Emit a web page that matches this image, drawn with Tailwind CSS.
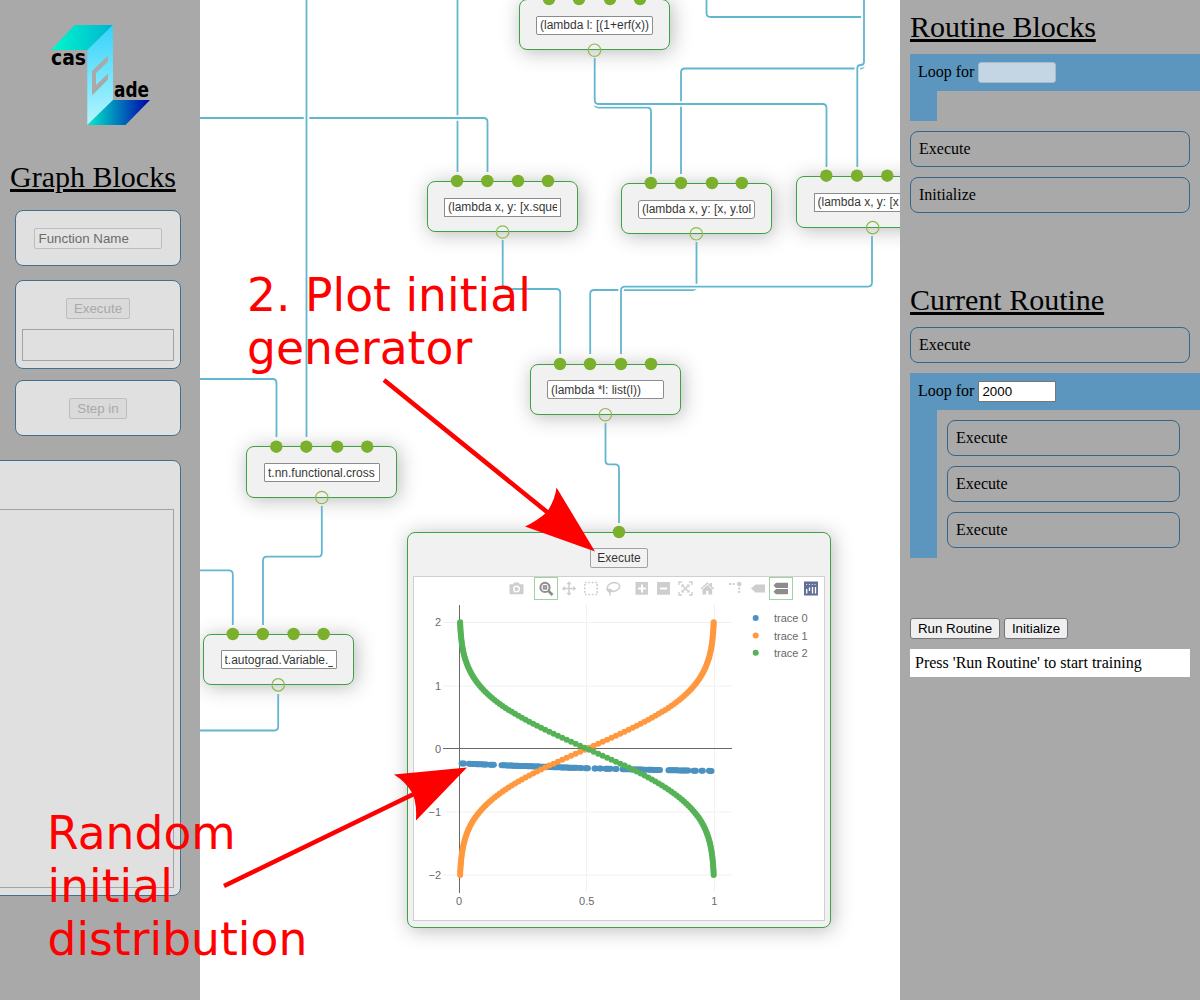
<!DOCTYPE html>
<html lang="en">
<head>
<meta charset="utf-8">
<title>Cascade</title>
<script src="https://cdn.jsdelivr.net/npm/@tailwindcss/browser@4"></script>
</head>
<body class="relative flex h-[1000px] w-[1200px] overflow-hidden bg-white font-['Liberation_Serif',serif] text-black">

<!-- Graph block palette -->
<aside class="h-full w-[200px] shrink-0 overflow-hidden bg-[#a9a9a9] pt-[25px]">
  <svg class="ml-[50px] block" width="102" height="102" viewBox="50 25 102 102">
    <defs>
      <linearGradient id="lt"><stop offset="0" stop-color="#00f8cc"/><stop offset="1" stop-color="#00b4d0"/></linearGradient>
      <linearGradient id="lm" x1="0" y1="0" x2="0" y2="1"><stop offset="0" stop-color="#35d2fb"/><stop offset="1" stop-color="#b4f6ff"/></linearGradient>
      <linearGradient id="lb"><stop offset="0" stop-color="#00efcc"/><stop offset="0.5" stop-color="#0078bc"/><stop offset="1" stop-color="#0000a8"/></linearGradient>
    </defs>
    <polygon points="74.5,25 113,25 88,50 51,50" fill="url(#lt)"/>
    <polygon points="113,25 113,100 87.3,125 87.3,50" fill="url(#lm)"/>
    <polygon points="113,100 150,100 125.5,125 87.3,125" fill="url(#lb)"/>
    <polygon points="108,55.500 92,71 92,95.500 108,79.500 108,73.500 96,85 96,73 108,61.500" fill="#a9a9a9"/>
    <text x="51" y="64.5" font-family="DejaVu Sans" font-weight="bold" font-size="21" textLength="35" lengthAdjust="spacingAndGlyphs">cas</text>
    <text x="114" y="97" font-family="DejaVu Sans" font-weight="bold" font-size="21" textLength="35" lengthAdjust="spacingAndGlyphs">ade</text>
  </svg>
  <h1 class="mt-[33px] ml-[10px] text-[30px] leading-[34px] underline">Graph Blocks</h1>
  <div class="mt-4 ml-[15px] flex h-14 w-[166px] items-center justify-center rounded-lg border border-[#44708f] bg-[#e0e0e0] font-['Liberation_Sans',sans-serif] text-[13.33px]">
    <div class="flex h-[21px] w-32 items-center rounded-[2px] border border-[#bdbdbd] bg-[#e3e3e3] pt-px pl-[3.5px] text-[#6c6c6c]">Function Name</div>
  </div>
  <div class="mt-[14px] ml-[15px] flex h-[89px] w-[166px] flex-col items-center rounded-lg border border-[#44708f] bg-[#e0e0e0] pt-[17px] font-['Liberation_Sans',sans-serif] text-[13.33px]">
    <div class="flex h-[21px] w-16 items-center justify-center rounded-[2px] border border-[#bdbdbd] bg-[#dadada] pt-px text-[#a9a9a9]">Execute</div>
    <div class="mt-[10px] h-8 w-[152px] border border-[#a3a3a3]"></div>
  </div>
  <div class="mt-[11px] ml-[15px] flex h-14 w-[166px] items-center justify-center rounded-lg border border-[#44708f] bg-[#e0e0e0] font-['Liberation_Sans',sans-serif] text-[13.33px]">
    <div class="flex h-[21px] w-[58px] items-center justify-center rounded-[2px] border border-[#bdbdbd] bg-[#dadada] pt-px text-[#a9a9a9]">Step in</div>
  </div>
  <div class="mt-6 -ml-[20px] h-[436px] w-[201px] rounded-lg border border-[#44708f] bg-[#e0e0e0] pt-12 pr-1.5">
    <div class="h-[379px] border border-[#a3a3a3]"></div>
  </div>
</aside>

<!-- Graph canvas -->
<main class="relative h-full w-[700px] shrink-0 overflow-hidden bg-white font-['Liberation_Sans',sans-serif] text-xs">
  <svg id="wires" class="absolute inset-0" width="700" height="1000" viewBox="200 0 700 1000" fill="none"></svg>

  <div class="absolute top-[-1px] left-[319px] flex h-[51px] w-[151px] justify-center rounded-lg border border-[#108a18] bg-[#eeeeef] pt-4 opacity-80 shadow-[2px_2px_19px_#aaa]">
    <div class="h-[19px] w-[117px] rounded-[2px] border border-[#707070] bg-white px-[3px]"><div class="overflow-hidden leading-[17px] whitespace-nowrap">(lambda l: [(1+erf(x))</div></div>
  </div>
  <div class="absolute top-[181px] left-[227px] flex h-[51px] w-[151px] justify-center rounded-lg border border-[#108a18] bg-[#eeeeef] pt-4 opacity-80 shadow-[2px_2px_19px_#aaa]">
    <div class="h-[19px] w-[117px] border border-[#707070] bg-white px-[3px]"><div class="overflow-hidden leading-[17px] whitespace-nowrap">(lambda x, y: [x.sque</div></div>
  </div>
  <div class="absolute top-[183px] left-[421px] flex h-[51px] w-[151px] justify-center rounded-lg border border-[#108a18] bg-[#eeeeef] pt-4 opacity-80 shadow-[2px_2px_19px_#aaa]">
    <div class="h-[19px] w-[117px] rounded-[3px] border border-[#707070] bg-white px-[3px]"><div class="overflow-hidden leading-[17px] whitespace-nowrap">(lambda x, y: [x, y.tol</div></div>
  </div>
  <div class="absolute top-[176px] left-[596px] flex h-[52px] w-[151px] justify-center rounded-lg border border-[#108a18] bg-[#eeeeef] pt-4 opacity-80 shadow-[2px_2px_19px_#aaa]">
    <div class="ml-0.5 h-[19px] w-[117px] border border-[#707070] bg-white px-[2.5px]"><div class="overflow-hidden leading-[17px] whitespace-nowrap">(lambda x, y: [x</div></div>
  </div>
  <div class="absolute top-[364px] left-[330px] flex h-[51px] w-[151px] justify-center rounded-lg border border-[#108a18] bg-[#eeeeef] pt-[15px] opacity-80 shadow-[2px_2px_19px_#aaa]">
    <div class="h-[19px] w-[117px] rounded-[2px] border border-[#707070] bg-white px-[3px]"><div class="overflow-hidden leading-[18px] whitespace-nowrap">(lambda *l: list(l))</div></div>
  </div>
  <div class="absolute top-[446px] left-[46px] flex h-[52px] w-[151px] justify-center rounded-lg border border-[#108a18] bg-[#eeeeef] pt-4 opacity-80 shadow-[2px_2px_19px_#aaa]">
    <div class="ml-px h-[19px] w-[116px] rounded-[1px] border border-[#707070] bg-white px-[3px]"><div class="overflow-hidden leading-[18px] whitespace-nowrap">t.nn.functional.cross</div></div>
  </div>
  <div class="absolute top-[634px] left-[3px] flex h-[51px] w-[151px] justify-center rounded-lg border border-[#108a18] bg-[#eeeeef] pt-[15px] opacity-80 shadow-[2px_2px_19px_#aaa]">
    <div class="h-[19px] w-[116px] rounded-[1px] border border-[#707070] bg-white px-[3px]"><div class="overflow-hidden leading-[18px] whitespace-nowrap">t.autograd.Variable._</div></div>
  </div>

  <!-- Plot node -->
  <div class="absolute top-[532px] left-[207px] flex h-[396px] w-[424px] flex-col items-center rounded-lg border border-[#108a18] bg-[#eeeeef] pt-[15px] opacity-80 shadow-[2px_2px_19px_#aaa]">
    <div class="flex h-5 w-[58px] items-center justify-center rounded-[2px] border border-[#8c8c8c] bg-[#efefef]">Execute</div>
    <div class="mt-2 h-[345px] w-[412px] border border-[#c4c4c4] bg-white">
      <svg id="plot" class="block" width="410" height="343" viewBox="414 577 410 343" font-size="11" fill="#444">
        <g stroke="#eee" fill="none">
          <path d="M586.5 604V892M714.5 604V892M443 622.5H732M443 686H732M443 812H732M443 875H732"/>
          <path stroke="#444" d="M459.5 605V893M443 748.5H732"/>
        </g>
        <g text-anchor="end"><text x="441" y="626">2</text><text x="441" y="690">1</text><text x="441" y="753">0</text><text x="441" y="816">−1</text><text x="441" y="879">−2</text></g>
        <g text-anchor="middle"><text x="459" y="905">0</text><text x="586.7" y="905">0.5</text><text x="714.3" y="905">1</text></g>
        <g id="points"></g>
        <circle cx="755.7" cy="618" r="3" fill="#1f77b4"/><circle cx="755.7" cy="635.5" r="3" fill="#ff7f0e"/><circle cx="755.7" cy="652.7" r="3" fill="#2ca02c"/>
        <text x="774" y="622">trace 0</text><text x="774" y="640">trace 1</text><text x="774" y="657">trace 2</text>

        <!-- Mode bar -->
        <g fill="#c3c3c3" stroke="none">
          <path fill-rule="evenodd" d="M509.5 585.2q0-1 1-1h2.7l1-1.7h4.6l1 1.7h2.7q1 0 1 1v8q0 1-1 1h-12q-1 0-1-1zM520 589a3.5 3.5 0 1 0-7 0a3.5 3.5 0 1 0 7 0z"/><circle cx="516.5" cy="589" r="2.1"/>
          <g fill="none" stroke="#707070">
            <circle cx="545" cy="587.4" r="4.6" stroke-width="2"/><path stroke-width="2.6" d="M548.5 591l4 4"/><rect x="543.3" y="585.7" width="3.4" height="3.4" fill="#909090" stroke-width="1"/>
          </g>
          <g fill="none" stroke="#c3c3c3" stroke-width="1.5"><path d="M563 588.5h12M569 582.5v12"/></g>
          <path d="M561.8 588.5l3-2.6v5.2zM576.2 588.5l-3-2.6v5.2zM569 581.3l-2.6 3h5.2zM569 595.7l-2.6-3h5.2z"/>
          <rect x="584.8" y="582.5" width="12.4" height="12" fill="none" stroke="#c3c3c3" stroke-width="1.6" stroke-dasharray="1.8 1.7"/>
          <g fill="none" stroke="#c3c3c3" stroke-width="1.6"><ellipse cx="613.5" cy="587" rx="6.2" ry="4.3" transform="rotate(-12 613.5 587)"/><path d="M607 588.5c-.5 3 4.5 4.2 4.3 1.8c-.3-1.7-3.4-.6-2.5 1.2c.6 1.4 2 1.7 1.4 4"/></g>
          <path fill-rule="evenodd" d="M635.500 582h12.500v12.800h-12.500zM641 584.500v3h-3v2h3v3h2v-3h3v-2h-3v-3z"/>
          <path fill-rule="evenodd" d="M657 582h13v12.800h-13zM660 587.500v2h7v-2z"/>
          <g fill="none" stroke="#c3c3c3" stroke-width="1.300"><path d="M679 585v-3h3M689 582h3v3M692 592v3h-3M682 595h-3v-3"/><path stroke-width="1.500" d="M682 585l7 7M689 585l-7 7"/></g>
          <path d="M681.500 587.500v-3h3zM686.500 584.500h3v3zM689.500 589.500v3h-3zM684.500 592.500h-3v-3z"/>
          <path d="M700.500 588.500l6.800-6.300l2.700 2.500v-1.700h2v3.500l2.200 2l-.9 1l-6-5.500l-6 5.500zM702.500 589.500l4.800-4.400l4.900 4.400v5h-3.700v-3.700h-2.500v3.700h-3.500z"/>
          <path d="M729 583h2v2h-2zM732.500 583h2v2h-2zM738.200 587.500h2v2h-2zM738.200 591h2v2h-2z"/><circle cx="739.200" cy="584" r="2.300"/>
          <path d="M751 588.500l4.500-4h9.500v8h-9.500z"/>
          <path fill="#707070" d="M773.500 585.500l2.500-2.700h12v5.200h-12zM773.500 591.700l2.500-2.700h12v5.200h-12z"/>
          <rect x="804" y="581.500" width="14" height="14" fill="#3b4d7d"/>
          <path stroke="#fff" stroke-width="1.300" d="M806.700 589v4.500M809.500 587.500v3.500M812.500 587v6.500M815.500 587v6.500" fill="none"/><path stroke="#c5cde4" stroke-width="1.200" stroke-dasharray="1.200 1.600" d="M806 584.500h10" fill="none"/>
          <g fill="none" stroke="#159015" stroke-dasharray="1 1"><rect x="534.500" y="577.500" width="23" height="22"/><rect x="769.500" y="577.500" width="23" height="22"/></g>
        </g>
      </svg>
    </div>
  </div>

  <svg id="ports" class="absolute inset-0" width="700" height="1000" viewBox="200 0 700 1000"></svg>
</main>

<!-- Routine panel -->
<aside class="h-full w-[300px] shrink-0 overflow-hidden bg-[#a9a9a9] pt-[10px] pl-[10px]">
  <h1 class="text-[30px] leading-[34px] underline">Routine Blocks</h1>
  <div class="mt-[10px] flex h-[37px] items-center gap-1 bg-[#5c95bd] pl-2"><span class="pb-0.5">Loop for</span><div class="h-[21px] w-[78px] rounded-[3px] border border-[#a4bccd] bg-[#c4d5e3]"></div></div>
  <div class="h-[30px] w-[27px] bg-[#5c95bd]"></div>
  <div class="mt-[10px] flex h-9 w-[280px] items-center rounded-lg border border-[#346789] pl-2">Execute</div>
  <div class="mt-[10px] flex h-9 w-[280px] items-center rounded-lg border border-[#346789] pl-2">Initialize</div>
  <h1 class="mt-[70px] text-[30px] leading-[34px] underline">Current Routine</h1>
  <div class="mt-[10px] flex h-9 w-[280px] items-center rounded-lg border border-[#346789] pl-2">Execute</div>
  <div class="mt-[10px] flex h-[37px] items-center gap-1 bg-[#5c95bd] pl-2"><span class="pb-0.5">Loop for</span><div class="flex h-[21px] w-[78px] items-center border border-[#767676] bg-white pl-[3px] font-['Liberation_Sans',sans-serif] text-[13.33px]">2000</div></div>
  <div class="flex">
    <div class="h-[148px] w-[27px] bg-[#5c95bd]"></div>
    <div class="ml-[10px] flex flex-col gap-[10px] pt-[10px]">
      <div class="flex h-9 w-[233px] items-center rounded-lg border border-[#346789] pl-2">Execute</div>
      <div class="flex h-9 w-[233px] items-center rounded-lg border border-[#346789] pl-2">Execute</div>
      <div class="flex h-9 w-[233px] items-center rounded-lg border border-[#346789] pl-2">Execute</div>
    </div>
  </div>
  <div class="mt-[60px] flex gap-1 font-['Liberation_Sans',sans-serif] text-[13.33px]">
    <button class="h-[21px] w-[90px] rounded-[3px] border border-[#767676] bg-[#efefef] leading-[19px]">Run Routine</button>
    <button class="h-[21px] w-16 rounded-[3px] border border-[#767676] bg-[#efefef] leading-[19px]">Initialize</button>
  </div>
  <div class="mt-[10px] flex h-7 w-[280px] items-center bg-white pl-[5px]">Press 'Run Routine' to start training</div>
</aside>

<!-- Tutorial annotations -->
<svg class="pointer-events-none absolute inset-0" width="1200" height="1000" viewBox="0 0 1200 1000" fill="#f00" font-family="DejaVu Sans" font-size="45.6">
  <text x="247" y="311">2. Plot initial</text>
  <text x="247" y="364">generator</text>
  <text x="47" y="849">Random</text>
  <text x="47.500" y="902">initial</text>
  <text x="47.500" y="955">distribution</text>
  <path d="M384 380L552 516M224 886L418 792" stroke="#f00" stroke-width="4.500" fill="none"/>
  <path d="M595 551.500L556.500 487.500Q555 500 547 512Q537 521 525 526.500Z"/>
  <path d="M467 767.500L394 774.500Q406 782 413 794Q417 806 416 820.500Z"/>
</svg>

<script>
const svg = (parent, tag, attrs) => {
  const el = document.createElementNS('http://www.w3.org/2000/svg', tag);
  for (const k in attrs) el.setAttribute(k, attrs[k]);
  parent.appendChild(el);
};
const wires = document.getElementById('wires');
const ports = document.getElementById('ports');
const points = document.getElementById('points');

// Orthogonal connectors, each with rounded elbows and a white outline.
const routes = [
  [[457.5,-5],[457.5,172]],
  [[190,118],[487.5,118],[487.5,172]],
  [[306.5,-5],[306.5,437]],
  [[706.5,-5],[706.5,17],[864,17]],
  [[864,-5],[864,68.5],[681,68.5],[681,174]],
  [[864,-5],[864,65],[857.3,65],[857.3,167]],
  [[594.7,58],[594.7,107.5],[651,107.5],[651,174]],
  [[594.7,58],[594.7,104],[826.5,104],[826.5,167]],
  [[502.7,240],[502.7,289],[560.2,289],[560.2,354]],
  [[696.5,242],[696.5,290],[590.2,290],[590.2,354]],
  [[872,236],[872,286.6],[621,286.6],[621,354]],
  [[605.5,423],[605.5,464.4],[619,464.4],[619,523]],
  [[190,379],[276.5,379],[276.5,437]],
  [[321.8,506],[321.8,556.7],[263,556.7],[263,625]],
  [[190,570.3],[232.8,570.3],[232.8,625]],
  [[278.2,694],[278.2,730.5],[190,730.5]]
];
for (const p of routes) {
  let d = `M${p[0]}`;
  for (let i = 1; i < p.length - 1; i++) {
    const [a, b, c] = [p[i-1], p[i], p[i+1]];
    const la = Math.hypot(b[0]-a[0], b[1]-a[1]), lc = Math.hypot(c[0]-b[0], c[1]-b[1]);
    const r = Math.min(4, la/2, lc/2);
    d += `L${b[0]-(b[0]-a[0])/la*r},${b[1]-(b[1]-a[1])/la*r}Q${b} ${b[0]+(c[0]-b[0])/lc*r},${b[1]+(c[1]-b[1])/lc*r}`;
  }
  d += `L${p[p.length-1]}`;
  svg(wires, 'path', {d, stroke: '#fff', 'stroke-width': 5.5});
  svg(wires, 'path', {d, stroke: '#61b7cf', 'stroke-width': 1.8});
}

// Input ports (filled) and output ports (hollow).
[[549,-1],[579,-1],[610,-1],[640,-1],[457,181],[487.3,181],[518,181],[548,181],
 [650.8,183],[681,183],[712,183],[741.8,183],[826.3,175.7],[857,175.7],[887.3,175.7],
 [560,364],[590,364],[621,364],[651,364],[276.3,446.7],[306.3,446.7],[337.2,446.7],[367.2,446.7],
 [232.8,634],[262.8,634],[293.6,634],[323.6,634],[619,532]]
  .forEach(([cx, cy]) => svg(ports, 'circle', {cx, cy, r: 6.2, fill: '#7ab02c'}));
[[594.5,50.2],[502.6,232],[696.3,233.8],[872.7,227.6],[605.4,414.7],[321.8,497.5],[278.2,684.9]]
  .forEach(([cx, cy]) => svg(ports, 'circle', {cx, cy, r: 6.2, fill: 'none', stroke: '#8dbb4a', 'stroke-width': 1.2}));

// Scatter traces.
const dot = (x, y, fill) => svg(points, 'circle', {cx: 459.5 + x * 254.8, cy: 748.7 - y * 63.2, r: 3, fill});
const erf = v => {
  const t = 1 / (1 + 0.3275911 * Math.abs(v));
  const e = 1 - ((((1.061405429*t - 1.453152027)*t + 1.421413741)*t - 0.284496736)*t + 0.254829592) * t * Math.exp(-v*v);
  return v < 0 ? -e : e;
};
[[.008,.02],[.037,.11],[.12,.138],[.165,.31],[.31,.46],[.473,.478],[.494,.508],[.53,.535],[.55,.558],[.573,.594],[.611,.62],[.64,.73],[.742,.79],[.82,.86],[.868,.898],[.918,.928],[.95,.958],[.979,.99]]
  .forEach(([a, b]) => { for (let x = a; x <= b + 1e-6; x += .005) dot(x, -.232 - .185*x + .065*x*x, '#1f77b4'); });
for (let i = 0; i < 128; i++) { const y = -2 + 4*i/127; dot((1 + erf(y))/2, y, '#ff7f0e'); }
for (let i = 0; i < 128; i++) { const y = -2 + 4*i/127; dot((1 - erf(y))/2, y, '#2ca02c'); }
</script>
</body>
</html>
